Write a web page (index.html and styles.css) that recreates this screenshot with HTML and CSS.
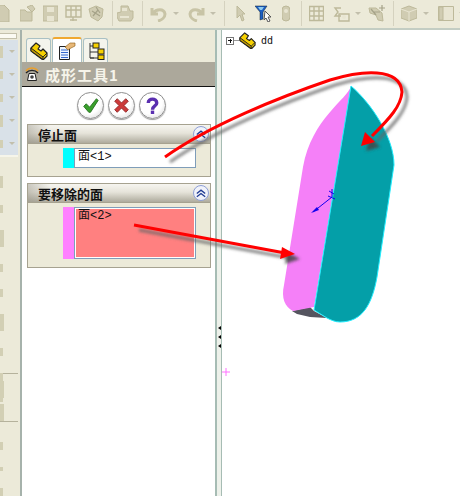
FILE: index.html
```html
<!DOCTYPE html>
<html lang="zh">
<head>
<meta charset="utf-8">
<title>成形工具</title>
<link rel="stylesheet" href="styles.css">
</head>
<body>
<div class="page">
  <header class="toolbar">
    <svg class="w17 first" viewBox="0 0 17 17"><path class="ti" d="M2 0h9l5 5v12H2z"/></svg>
    <svg class="w16 g10" viewBox="0 0 16 17"><path class="ti" d="M0 5h5l2 2h5v9H0zM7 2l5-2 3 4-3 3-2-2z"/></svg>
    <svg class="w15 g7" viewBox="0 0 15 17"><path class="ti" d="M0 1h15v15H0z"/><path class="tl" d="M4 2h7v5H4zM4 11h7v5H4z"/></svg>
    <svg class="w17 g7" viewBox="0 0 17 17"><path class="to" d="M1 1h15v11H1zM1 5h15M6 1v11M11 1v11M8 12v4M5 15h7"/></svg>
    <svg class="w16 g6" viewBox="0 0 16 17"><path class="ti" d="M1 4l7-3 7 3-1 8-4 4-7-4z"/><path class="to2" d="M4 6l8 5M8 2l4 6M5 11l5-6"/></svg>
    <i class="sep g8"></i>
    <svg class="w17 g4" viewBox="0 0 17 17"><path class="ti" d="M4 1h7l2 5h3v7l-2 3H2l-2-4V8l4-1z"/><path class="tl" d="M5 3h5v3H5zM3 11h9v2H3z"/></svg>
    <i class="sep g8"></i>
    <svg class="w17 g7" viewBox="0 0 17 17"><path class="tb" d="M2 3v6h6M3 8c3-4 11-5 12 1 0 3-3 6-7 7"/></svg>
    <i class="dd g6"></i>
    <svg class="w17 g9" viewBox="0 0 17 17"><path class="tb" d="M15 3v6H9M14 8C11 4 3 3 2 9c0 3 3 6 7 7"/></svg>
    <i class="dd g5"></i>
    <i class="sep g8"></i>
    <svg class="w10 g11" viewBox="0 0 10 17"><path class="ti" d="M1 1l8 8H6l2 6-2 1-2-6-3 3z"/></svg>
    <svg class="w17 g9" viewBox="0 0 17 17"><path fill="#1c5fc4" stroke="#123" stroke-width=".5" d="M0 1h12L8 7v7l-3 1V7z"/><path fill="#8ccaf0" d="M3 2h6L7 5H5z"/><path fill="#fff" stroke="#555" d="M10 6l6 6-3 0 2 4-2 1-2-4-2 2z"/></svg>
    <svg class="w8 g10" viewBox="0 0 8 17"><rect class="ti" x="0" y="1" width="8" height="15" rx="4"/><circle class="tl" cx="4" cy="6" r="2"/></svg>
    <i class="sep g11"></i>
    <svg class="w15 g7" viewBox="0 0 15 17"><path class="to" d="M.5 1.500h14v14H.5zM.5 6h14M.5 11h14M5 1.500v14M10 1.500v14"/></svg>
    <svg class="w17 g9" viewBox="0 0 17 17"><path class="to" d="M8 3H2l3 4-3 4h6"/><path class="to" d="M6 9h10v7H6z"/><circle class="tl" cx="11" cy="12" r="2"/></svg>
    <i class="dd g5"></i>
    <svg class="w17 g7" viewBox="0 0 17 17"><path class="ti" d="M1 3l7 0 6 5 1 8-5-1-2-5-6-2z"/><path class="to2" d="M3 4l5 6M14 0v6M11 3h6M5 7l7 0"/></svg>
    <i class="sep g8"></i>
    <svg class="w16 g7" viewBox="0 0 16 17"><path class="ti" d="M0 4l8-3 8 3v9l-8 3-8-3z"/><path class="tl2" d="M0 4l8 3 8-3M8 7v9"/></svg>
    <i class="dd g6"></i>
    <svg class="w16 g9" viewBox="0 0 16 17"><path class="tpane" d="M.5 1.500h15v14H.5z"/><path class="ti" d="M1 2h4v13H1z"/></svg>
    <i class="dd g5"></i>
  </header>

  <main class="main">
    <aside class="strip">
      <div class="strip-top"><span class="strip-bar"></span></div>
      <div class="strip-blue">
        <div class="srow"><b class="frag tall"></b><i class="dd"></i></div>
        <div class="srow"><b class="frag"></b><i class="dd"></i></div>
        <div class="srow"><b class="frag"></b><i class="dd"></i></div>
        <div class="srow"><b class="frag tall"></b><i class="dd"></i></div>
        <div class="srow"><b class="frag"></b><i class="dd"></i></div>
      </div>
      <div class="strip-group">
        <b class="frag tall"></b><b class="frag"></b><b class="frag xtall"></b><b class="frag"></b><b class="frag"></b><b class="frag xtall"></b><b class="frag"></b><b class="frag"></b><b class="frag tiny"></b>
      </div>
      <div class="strip-group two">
        <b class="frag xtall"></b><b class="frag xtall"></b>
      </div>
      <div class="strip-group three">
        <b class="frag"></b><b class="frag tiny"></b><b class="frag"></b>
      </div>
    </aside>

    <section class="panel">
      <nav class="tabs">
        <div class="tab">
          <svg class="tabicon" viewBox="0 0 18 18"><path fill="#f6d000" stroke="#222" stroke-width="1.200" stroke-linejoin="round" d="M1 6l5-5 4 3-2 3 3 2 2-2 4 4v3l-4 4L1 9z"/><path fill="#c49c00" stroke="#222" d="M1 6l12 9v2.500L1 9z"/><path fill="none" stroke="#222" d="M13 15l4-4"/></svg>
        </div>
        <div class="tab active">
          <svg class="tabicon" viewBox="0 0 18 18"><path fill="#eef6ff" stroke="#222" d="M1.500 4.500h10v13h-10z"/><path stroke="#36c" d="M3 8h7M3 10.500h7M3 13h7M3 15.500h7"/><path fill="#e8b878" stroke="#8a5a10" stroke-width=".6" d="M7 5l5-4h5v3l-4 2-3 2z"/></svg>
        </div>
        <div class="tab">
          <svg class="tabicon" viewBox="0 0 18 18"><path fill="none" stroke="#333" d="M3 1v15h4M3 4h5M3 10h8M3 16h8"/><rect fill="#f6d000" stroke="#222" x="6" y="1" width="6" height="5"/><rect fill="#f6d000" stroke="#222" x="11" y="7" width="6" height="5"/><rect fill="#f6d000" stroke="#222" x="11" y="13" width="6" height="4.500"/></svg>
        </div>
      </nav>
      <h1 class="title">
        <svg class="titleicon" viewBox="0 0 14 14"><path fill="none" stroke="#e8a030" stroke-width="1.400" d="M1 4C4 0 10 0 13 4"/><path fill="none" stroke="#222" stroke-width="1.400" d="M1 6C4 2.500 10 2.500 13 6"/><path fill="#fff" stroke="#222" d="M4 6.500h6l1.500 7h-9z"/><circle cx="7" cy="10" r="1.800" fill="#444"/></svg>
        <span>成形工具1</span>
      </h1>
      <div class="actions">
        <button class="round">
          <svg viewBox="0 0 20 20"><path fill="#3aa02c" stroke="#1d6a18" d="M2 11l3-3 4 4 8-10 2 2-9 14h-2z"/></svg>
        </button>
        <button class="round">
          <svg viewBox="0 0 20 20"><path fill="#cc3a3a" stroke="#8a2020" d="M2 5l3-3 5 5 5-5 3 3-5 5 5 5-3 3-5-5-5 5-3-3 5-5z"/></svg>
        </button>
        <button class="round">
          <svg viewBox="0 0 20 20"><path fill="none" stroke="#5a2fb0" stroke-width="4" d="M5 7c0-6 10-6 10 0 0 4-5 3-5 8"/><rect x="8" y="16" width="4" height="4" fill="#5a2fb0"/></svg>
        </button>
      </div>

      <section class="group">
        <div class="ghead"><span>停止面</span><i class="chev"><svg viewBox="0 0 12 10"><path d="M1 5l5-4 5 4M1 9l5-4 5 4"/></svg></i></div>
        <div class="gbody">
          <span class="swatch cyan"></span>
          <div class="field">面&lt;1&gt;</div>
        </div>
      </section>

      <section class="group">
        <div class="ghead"><span>要移除的面</span><i class="chev"><svg viewBox="0 0 12 10"><path d="M1 5l5-4 5 4M1 9l5-4 5 4"/></svg></i></div>
        <div class="gbody">
          <span class="swatch pink"></span>
          <div class="field sel">面&lt;2&gt;</div>
        </div>
      </section>
    </section>

    <div class="splitter"><i class="tri"></i><i class="tri"></i><i class="tri"></i></div>

    <section class="canvas">
      <div class="tree">
        <span class="expander"></span><span class="stub"></span>
        <svg class="particon" viewBox="0 0 18 18"><path fill="#f6d000" stroke="#222" stroke-width="1.200" stroke-linejoin="round" d="M1 6l5-5 4 3-2 3 3 2 2-2 4 4v3l-4 4L1 9z"/><path fill="#c49c00" stroke="#222" d="M1 6l12 9v2.500L1 9z"/><path fill="none" stroke="#222" d="M13 15l4-4"/></svg>
        <span class="treelabel">dd</span>
      </div>
    </section>
  </main>

  <svg class="overlay" viewBox="0 0 460 496">
    <defs>
      <filter id="soft" x="-20%" y="-20%" width="140%" height="140%"><feGaussianBlur stdDeviation="1.800"/></filter>
    </defs>
    <path fill="#55555f" d="M292 311L310 307 314 311 327 318 310 317 297 314z"/>
    <path fill="#f580f8" d="M351 86C347 100 312 118 303 167L284 285C281 298 285 307 293 311L314 307z"/>
    <path fill="#049fa8" stroke="#2ef" stroke-width="1" d="M351 86C372 104 394 138 394 165L377 277C372 305 362 322 340 322 335 322 331 320 327 318L314 310z"/>
    <path fill="none" stroke="#10e" stroke-width="1" d="M332 197L313 212M332 189v8M328 196l7 3M329 191l5 3"/>
    <path fill="#10e" d="M311 213l6-6 2 3z"/>
    <path fill="none" stroke="#ff70ff" d="M222 372h8M226 368v8"/>

    <g class="shadow" filter="url(#soft)" transform="translate(5 5)">
      <path class="redline" d="M165 157C210 125 280 97 330 80 350 74 365 72 377 73 392 74 401 80 402 92 401 106 390 118 372 136"/>
      <path class="redhead" d="M361 146L365 132 375 142z"/>
      <path class="redline" d="M134 225L285 253"/>
      <path class="redhead" d="M295 254L282 247 280 259z"/>
    </g>
    <path class="redline" d="M165 157C210 125 280 97 330 80 350 74 365 72 377 73 392 74 401 80 402 92 401 106 390 118 372 136"/>
    <path class="redhead" d="M361 146L365 132 375 142z"/>
    <path class="redline" d="M134 225L285 253"/>
    <path class="redhead" d="M295 254L282 247 280 259z"/>
  </svg>
</div>
</body>
</html>
```

FILE: styles.css
```css
* { box-sizing: border-box; }
html, body { margin: 0; padding: 0; }
body { background: #fff; overflow: hidden; }

.page {
  position: relative;
  width: 460px;
  height: 496px;
  display: flex;
  flex-direction: column;
  overflow: hidden;
  font-family: "Noto Sans CJK SC", "Liberation Sans", sans-serif;
}

/* toolbar */
.toolbar {
  flex: 0 0 30px;
  display: flex;
  align-items: center;
  background: #ecead9;
  border-bottom: 2px solid #c3cdc3;
  padding-bottom: 1px;
}
.toolbar svg { height: 17px; flex: none; }
.toolbar .first { margin-left: -7px; }
.w8 { width: 8px; } .w10 { width: 10px; } .w15 { width: 15px; } .w16 { width: 16px; } .w17 { width: 17px; }
.g4 { margin-left: 4px; } .g5 { margin-left: 5px; } .g6 { margin-left: 6px; } .g7 { margin-left: 7px; }
.g8 { margin-left: 8px; } .g9 { margin-left: 9px; } .g10 { margin-left: 10px; } .g11 { margin-left: 11px; }
.sep { display: block; width: 1px; height: 25px; background: #d5d2bf; flex: none; }
.dd {
  display: block; flex: none; width: 0; height: 0;
  border-left: 3px solid transparent;
  border-right: 3px solid transparent;
  border-top: 3px solid #c2bfac;
}
.ti { fill: #d0ccb2; stroke: #bdb99a; stroke-width: 1; }
.tl { fill: #e8e5d2; }
.tl2 { fill: none; stroke: #e8e5d2; }
.to { fill: none; stroke: #bdb99a; stroke-width: 1.400; }
.to2 { fill: none; stroke: #a5a288; stroke-width: 1.200; }
.tb { fill: none; stroke: #c8c4a6; stroke-width: 3; }
.tpane { fill: #e8e5d2; stroke: #bdb99a; }

/* main area */
.main { flex: 1; display: flex; min-height: 0; }

/* left strip */
.strip {
  flex: 0 0 22px;
  display: flex;
  flex-direction: column;
  background: #ecead9;
  border-right: 2px solid #a6b2ab;
}
.strip-top { height: 13px; padding-top: 3px; }
.strip-bar { display: block; width: 17px; height: 6px; background: #fbfaf2; border: 1px solid #c4c1ac; border-left: 0; }
.strip-blue {
  height: 117px;
  width: 18px;
  background: #d9e1e8;
  border-bottom: 2px solid #f6f5ea;
  display: flex;
  flex-direction: column;
}
.srow { flex: 0 0 23px; display: flex; align-items: center; justify-content: space-between; padding-right: 3px; }
.frag { display: block; width: 3px; height: 8px; background: #d2cfb4; flex: none; }
.frag.tall { height: 12px; }
.frag.xtall { height: 17px; width: 4px; }
.frag.tiny { height: 4px; }
.strip-group { display: flex; flex-direction: column; gap: 17px; padding-top: 19px; height: 217px; width: 18px; border-bottom: 1px solid #b5b29c; }
.strip-group.two { height: 54px; gap: 6px; padding-top: 7px; }
.strip-group.three { border-bottom: 0; flex: 1; height: auto; padding-top: 20px; }

/* feature panel */
.panel {
  flex: 0 0 193px;
  display: flex;
  flex-direction: column;
  background: #fff;
}
.tabs {
  flex: 0 0 32px;
  display: flex;
  align-items: flex-end;
  gap: 1px;
  padding-left: 4px;
  background: #ecead9;
}
.tab {
  width: 25px;
  height: 24px;
  display: flex;
  align-items: center;
  justify-content: center;
  background: #f4f4ec;
  border: 1px solid #a9c0c4;
  border-bottom: 0;
  border-radius: 3px 3px 0 0;
}
.tab.active {
  width: 30px;
  height: 25px;
  background: #fff;
  border-top: 2px solid #f0a830;
}
.tabicon { width: 18px; height: 18px; }
.title {
  flex: 0 0 25px;
  margin: 0;
  display: flex;
  align-items: center;
  gap: 6px;
  padding-left: 3px;
  background: #aca89b;
  border-bottom: 1px solid #111;
  color: #f6f4ea;
  font-size: 15px;
  font-weight: 700;
  letter-spacing: 1px;
  line-height: 1;
}
.titleicon { width: 14px; height: 14px; flex: none; }
.actions {
  flex: 0 0 37px;
  display: flex;
  justify-content: center;
  gap: 4px;
  padding: 5px 0 0 6px;
}
.round {
  width: 27px;
  height: 27px;
  padding: 4px;
  border: 1px solid #8f8f8f;
  border-radius: 50%;
  background: radial-gradient(circle at 40% 35%, #fff 55%, #d0d0d0);
  box-shadow: 0 1px 1px #999;
}
.round svg { display: block; width: 17px; height: 17px; }

.group {
  margin: 0 4px 6px 5px;
  background: #ecead9;
  border: 1px solid #a6a290;
}
.ghead {
  height: 19px;
  display: flex;
  align-items: center;
  justify-content: space-between;
  padding: 0 1px 0 10px;
  background: linear-gradient(90deg, rgba(150, 147, 135, .45) 0, rgba(150, 147, 135, 0) 22px), linear-gradient(180deg, #f6f5f0 0, #e6e4da 45%, #aeab9d 100%);
  border-bottom: 1px solid #a6a290;
  font-size: 13px;
  font-weight: 700;
  color: #111;
  line-height: 1;
}
.chev {
  width: 16px;
  height: 16px;
  flex: none;
  border-radius: 50%;
  border: 1px solid #8e9fd6;
  background: #f0f2fa;
  display: flex;
  align-items: center;
  justify-content: center;
}
.chev svg { width: 10px; height: 9px; fill: none; stroke: #1f3b94; stroke-width: 1.600; }
.gbody { display: flex; padding: 4px 14px 8px 35px; }
.swatch { flex: 0 0 11px; }
.swatch.cyan { background: #00ffff; }
.swatch.pink { background: #ff80ff; }
.field {
  flex: 1;
  height: 20px;
  padding-left: 3px;
  background: #fff;
  border: 1px solid #7f9db9;
  font-family: "Liberation Mono", "Noto Sans CJK SC", monospace;
  font-size: 12px;
  line-height: 17px;
  color: #111;
}
.field.sel {
  height: 52px;
  background: #ff8080;
  box-shadow: inset 0 0 0 1px #fff;
}

/* splitter */
.splitter {
  flex: 0 0 7px;
  display: flex;
  flex-direction: column;
  align-items: center;
  gap: 5px;
  padding-top: 296px;
  background: #edf1ea;
  border-left: 2px solid #a6bcb4;
  border-right: 1px solid #a6bcb4;
}
.tri {
  display: block; width: 0; height: 0;
  border-top: 2px solid transparent;
  border-bottom: 2px solid transparent;
  border-right: 3px solid #000;
}

/* graphics area */
.canvas { flex: 1; background: #fff; padding: 2px 0 0 4px; }
.tree { display: flex; align-items: center; height: 17px; }
.expander {
  width: 8px; height: 8px; flex: none;
  border: 1px solid #777;
  background: linear-gradient(#111, #111) center / 4px 1px no-repeat, linear-gradient(#111, #111) center / 1px 4px no-repeat, #fff;
}
.stub { width: 5px; height: 1px; background: #999; flex: none; }
.particon { width: 17px; height: 17px; flex: none; }
.treelabel { margin-left: 5px; font-family: "DejaVu Sans Mono", monospace; font-size: 10px; color: #111; }

/* annotation layer */
.overlay { position: absolute; left: 0; top: 0; width: 460px; height: 496px; pointer-events: none; }
.redline { fill: none; stroke: #f00; stroke-width: 3; }
.redhead { fill: #f00; }
.shadow .redline { stroke: #666; opacity: .8; }
.shadow .redhead { fill: #444; opacity: .85; }
```
